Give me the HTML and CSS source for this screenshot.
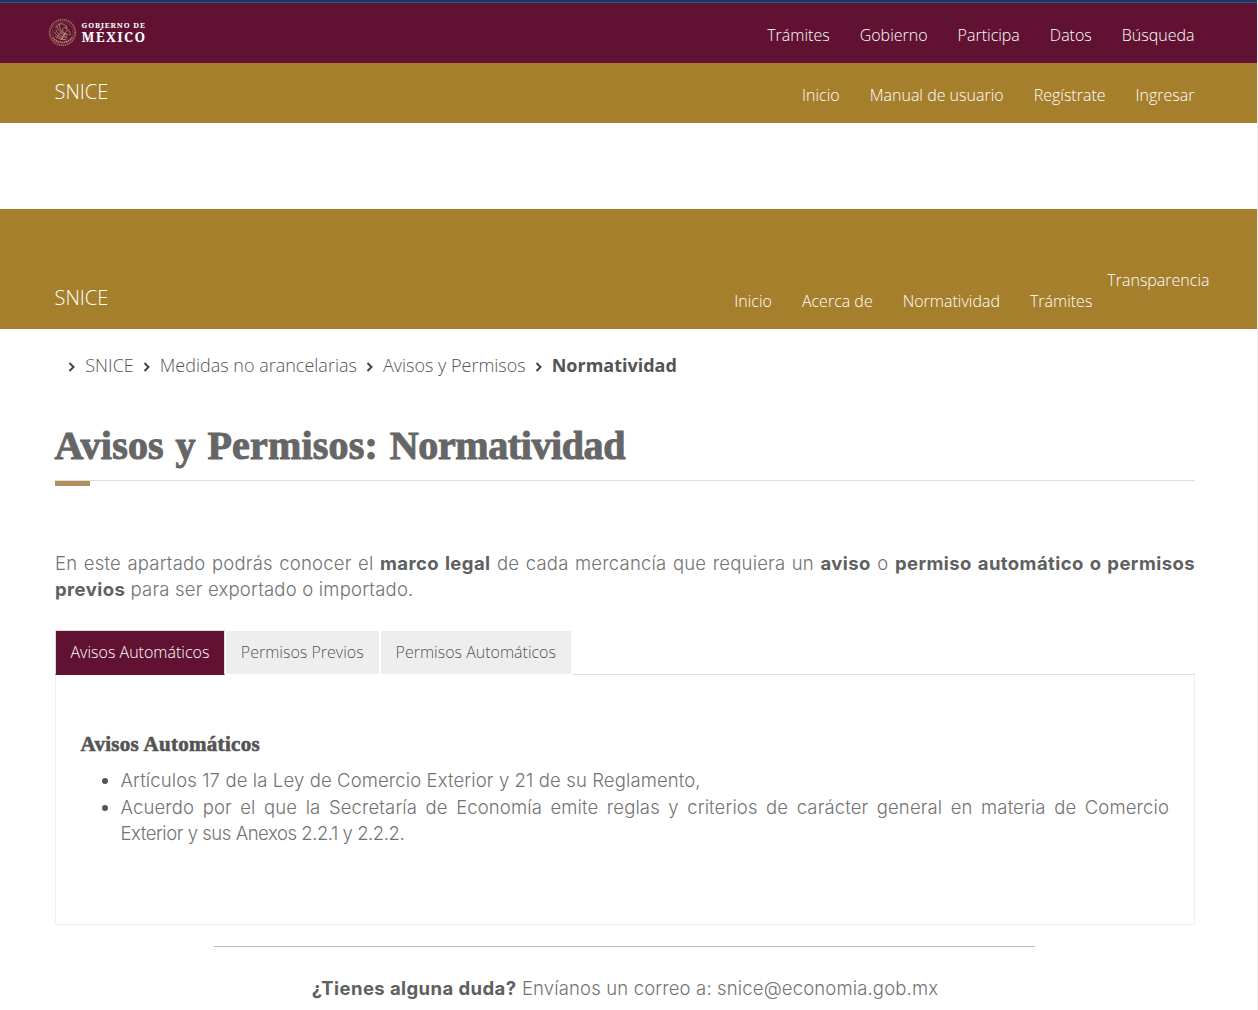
FILE: index.html
```html
<!DOCTYPE html>
<html lang="es">
<head>
<meta charset="utf-8">
<title>SNICE - Avisos y Permisos: Normatividad</title>
<link rel="stylesheet" href="styles.css">
</head>
<body>
<div class="page">
<header class="gov-bar">
  <a class="logo" aria-label="Gobierno de México">
    <svg class="seal" viewBox="0 0 30 30" fill="none" stroke="#b58e75">
      <circle cx="15" cy="15" r="13.2" stroke-width="2" stroke-dasharray="1.3 .8" opacity=".75"/>
      <circle cx="15" cy="15" r="10.8" stroke-width=".5" opacity=".6"/>
      <path d="M8 10c2-4 6-5 9-3l3 2-3 1c4 1 6 4 6 8M9 8c1 5 5 7 11 13M6 14c3 4 7 7 13 9M7 18c4 4 8 5 12 4M12 6c-1 5 2 9 8 12M8 12c3 6 7 8 12 8M16 10c-3 4 2 7 5 7M14 14l-5 7M17 16l-4 7M20 12l-6 10" stroke-width=".9"/>
      <path d="M5 20c4 7 16 7 20 0" stroke-width="1.6" stroke-dasharray="1.5 .7"/>
    </svg>
    <span class="wordmark"><span class="wm-small">GOBIERNO DE</span><span class="wm-big">MÉXICO</span></span>
  </a>
  <nav class="nav"><a>Trámites</a><a>Gobierno</a><a>Participa</a><a>Datos</a><a>Búsqueda</a></nav>
</header>
<div class="sub-bar">
  <a class="brand">SNICE</a>
  <nav class="nav"><a>Inicio</a><a>Manual de usuario</a><a>Regístrate</a><a>Ingresar</a></nav>
</div>
<div class="site-bar">
  <a class="brand">SNICE</a>
  <nav class="nav"><a>Inicio</a><a>Acerca de</a><a>Normatividad</a><a>Trámites</a><a class="raised">Transparencia</a></nav>
</div>
<main class="content">
  <ol class="crumbs">
    <li><svg class="chev" viewBox="0 0 8 10"><path d="M1.5 1l4 4-4 4"/></svg>SNICE</li>
    <li><svg class="chev" viewBox="0 0 8 10"><path d="M1.5 1l4 4-4 4"/></svg>Medidas no arancelarias</li>
    <li><svg class="chev" viewBox="0 0 8 10"><path d="M1.5 1l4 4-4 4"/></svg>Avisos y Permisos</li>
    <li class="current"><svg class="chev" viewBox="0 0 8 10"><path d="M1.5 1l4 4-4 4"/></svg>Normatividad</li>
  </ol>
  <h1>Avisos y Permisos: <span class="tight">Normatividad</span></h1>
  <div class="rule"></div>
  <p class="intro">En este apartado podrás conocer el <b>marco legal</b> de cada mercancía que requiera un <b>aviso</b> o <b>permiso automático o permisos previos</b> para ser exportado o importado.</p>
  <div class="tabs">
    <a class="tab active">Avisos Automáticos</a><a class="tab">Permisos Previos</a><a class="tab">Permisos Automáticos</a>
    <span class="tab-line"></span>
  </div>
  <section class="panel">
    <h2>Avisos Automáticos</h2>
    <ul>
      <li>Artículos 17 de la Ley de Comercio Exterior y 21 de su Reglamento,</li>
      <li class="second">Acuerdo por el que la Secretaría de Economía emite reglas y criterios de carácter general en materia de Comercio <span class="anexos">Exterior y sus Anexos 2.2.1 y 2.2.2.</span></li>
    </ul>
  </section>
  <hr class="divider">
  <p class="contact"><b>¿Tienes alguna duda?</b> <span>Envíanos un correo a: snice@economia.gob.mx</span></p>
</main>
</div>
</body>
</html>
```
FILE: styles.css
```css
* { box-sizing: border-box; }
body { margin: 0; background: #fff; color: #545454; font: 300 18px/26px "Open Sans", sans-serif; }
.page { height: 1010px; overflow: hidden; border-right: 1px solid #ededed; }
.gov-bar { height: 63px; border-top: 2px solid #1d355e; background: #611232; box-shadow: inset 0 1px #34557c; display: flex; justify-content: space-between; align-items: flex-start; padding: 1px 47.5px 0 48px; }
.logo { display: flex; gap: 4.5px; padding-top: 15px; color: #fff; }
.seal { width: 29px; height: 29px; }
.wordmark { display: flex; flex-direction: column; padding-top: 3px; font-family: "Noto Serif", "DejaVu Serif", serif; font-weight: 700; white-space: nowrap; }
.wm-small { font-size: 7.5px; line-height: 9px; letter-spacing: .9px; }
.wm-big { font-size: 13.5px; line-height: 15px; letter-spacing: 1.4px; }
.nav { display: flex; font-size: 16px; line-height: 22px; color: #fff; white-space: nowrap; }
.nav a { padding: 0 15px; }
.gov-bar .nav { padding-top: 21px; }
.sub-bar, .site-bar { background: #a57f2c; display: flex; justify-content: space-between; color: #fff; }
.sub-bar { height: 60px; padding: 0 47.5px 0 54.5px; }
.brand { font-size: 20px; line-height: 28px; padding-top: 15px; }
.sub-bar .nav { padding-top: 21px; }
.site-bar { height: 120px; margin-top: 86px; padding: 60px 32.5px 0 54.5px; }
.site-bar .nav { padding-top: 21px; }
.site-bar .raised { margin-top: -21px; padding-left: 0; }
.content { padding: 0 62px 0 55px; }
.crumbs { display: flex; list-style: none; margin: 0; padding: 23px 0 0 13px; white-space: nowrap; line-height: 26px; }
.crumbs li { margin-right: 9px; }
.crumbs li:first-child { margin-left: .3px; }
.chev { width: 8px; height: 10px; margin-right: 9px; vertical-align: 0; fill: none; stroke: #444; stroke-width: 2; }
.current { font-weight: 700; }
h1 { margin: 44px 0 0 -.5px; height: 58px; font: 700 40px/48px "Liberation Serif", serif; letter-spacing: .2px; word-spacing: 1.5px; color: #666; white-space: nowrap; -webkit-text-stroke: 1px #666; }
.tight { letter-spacing: -.4px; }
.rule { height: 6px; border-top: 1px solid #ddd; background: linear-gradient(#b38e5d, #b38e5d) no-repeat 0 0 / 35px 5px; }
.intro { margin: 64px 0 0; height: 53px; text-align: justify; }
.intro, .panel ul, .contact { color: #737373; font-family: Inter, "Open Sans", sans-serif; font-size: 18.5px; letter-spacing: .2px; }
.intro b, .contact b { font-weight: 700; color: #606060; letter-spacing: .42px; }
.contact span { letter-spacing: .15px; }
.tabs { display: flex; height: 45px; margin-top: 27px; font-size: 16px; line-height: 43px; white-space: nowrap; }
.tab { background: #eee; height: 43px; margin: 1px 2px 0 0; padding: 0 15px; }
.tab.active { height: 45px; margin: 0 1px 0 0; border: 1px solid #ddd; border-bottom-color: #611232; padding: 0 14.5px; background: #611232; color: #fff; }
.tab-line { flex: 1; border-bottom: 1px solid #ddd; height: 45px; margin-left: -1px; }
.panel { height: 250px; border: 1px solid #eee; border-top: 0; padding: 56px 25px 0 24.5px; }
h2 { margin: 0; color: #545454; font: 700 21px/26px "Liberation Serif", serif; letter-spacing: .3px; -webkit-text-stroke: .6px #545454; }
.panel ul { margin: 10px 0 0; padding: 0 0 0 40px; text-align: justify; line-height: 26px; letter-spacing: .12px; }
.anexos { letter-spacing: -.45px; }
li.second { margin-top: 1px; }
ul li::marker { color: #545454; }
.divider { width: 821px; border: 0; border-top: 1px solid #b8b8b8; margin: 21px 0 0 159px; }
.contact { margin: 28px 0 0; text-align: center; white-space: nowrap; }
```
